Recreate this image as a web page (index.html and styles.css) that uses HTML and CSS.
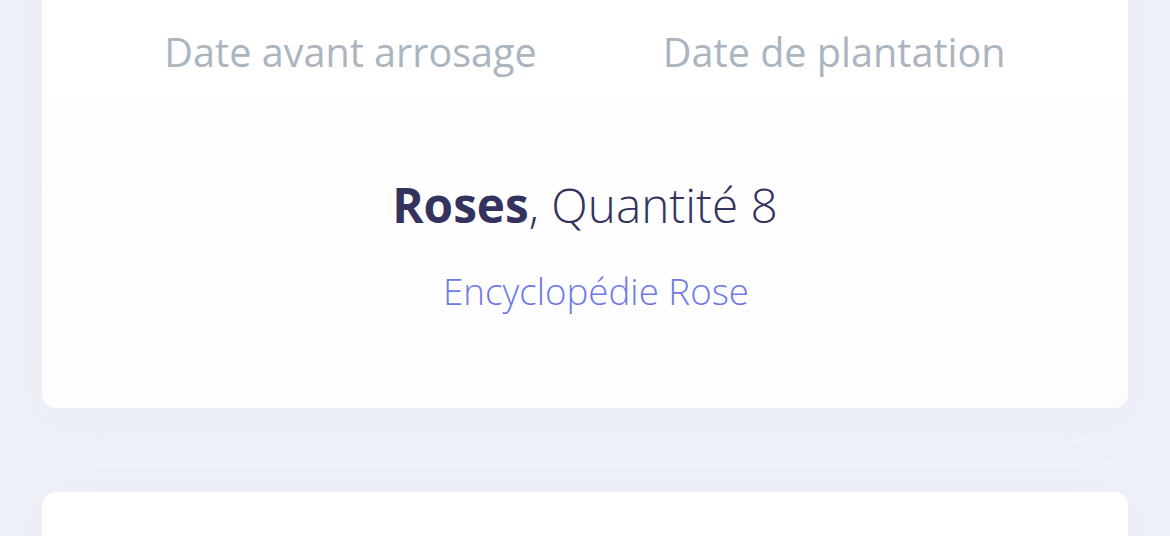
FILE: index.html
```html
<!DOCTYPE html>
<html lang="fr">
<head>
<meta charset="utf-8">
<link rel="stylesheet" href="styles.css">
</head>
<body>
<main class="list">
  <section class="card">
    <div class="dates">
      <span class="date-label">Date avant arrosage</span>
      <span class="date-label">Date de plantation</span>
    </div>
    <h2 class="title"><strong>Roses</strong>, Quantité 8</h2>
    <a class="link" href="#">Encyclopédie Rose</a>
  </section>
  <section class="card card-next"></section>
</main>
</body>
</html>
```
FILE: styles.css
```css
html, body {
  margin: 0;
  padding: 0;
}
body {
  background: #eff1f8;
  font-family: "Open Sans", "Noto Sans", sans-serif;
  height: 536px;
  overflow: hidden;
}
.list {
  display: flex;
  flex-direction: column;
  gap: 84px;
  padding: 0 42px;
  margin-top: -30px;
}
.card {
  background: linear-gradient(180deg, #ffffff 0%, #fdfdff 100%);
  border-radius: 14px;
  box-shadow: 0 8px 50px rgba(228, 231, 243, 0.45);
  display: flex;
  flex-direction: column;
  align-items: center;
  padding-top: 63px;
  height: 438px;
  box-sizing: border-box;
}
.card-next {
  height: 200px;
}
.dates {
  display: flex;
  gap: 126px;
  justify-content: center;
}
.date-label {
  font-size: 39.6px;
  color: #abb5c0;
  line-height: 1;
}
.title {
  margin: 108px 0 0;
  font-size: 47.7px;
  font-weight: 300;
  color: #34335e;
  line-height: 1;
}
.title strong {
  font-weight: 700;
}
.link {
  margin-top: 45px;
  margin-left: 22px;
  font-size: 36.7px;
  font-weight: 300;
  color: #6f79e8;
  text-decoration: none;
  line-height: 1;
}
```
